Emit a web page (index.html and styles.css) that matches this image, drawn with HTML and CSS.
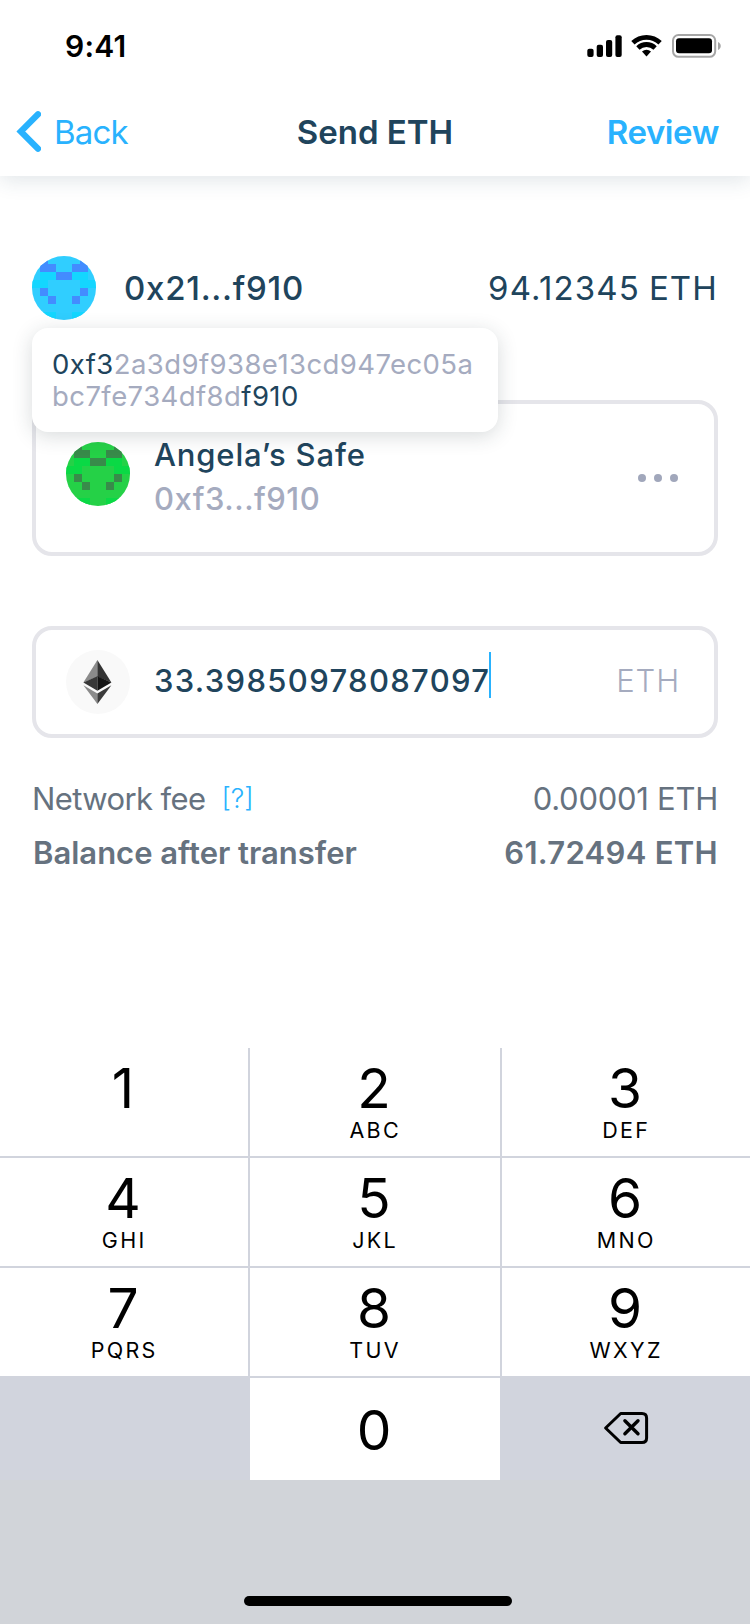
FILE: index.html
```html
<!DOCTYPE html>
<html lang="en">
<head>
<meta charset="utf-8">
<title>Send ETH</title>
<link rel="stylesheet" href="styles.css">
</head>
<body>
<div class="screen">
  <header class="header">
    <div class="status">
      <span class="status-time">9:41</span>
      <svg class="status-icons" width="135" height="28" viewBox="587 32 135 28">
        <rect x="587.3" y="48.7" width="6.3" height="8.3" rx="2"/>
        <rect x="596.7" y="44.7" width="6.3" height="12.3" rx="2"/>
        <rect x="606" y="40" width="6.2" height="17" rx="2"/>
        <rect x="615.4" y="35.2" width="6.3" height="21.8" rx="2"/>
        <path d="M632.9 42.8A19.8 19.8 0 0 1 660.1 42.8M637.9 47.9A12.6 12.6 0 0 1 655.1 47.9" fill="none" stroke="#000" stroke-width="4.8"/>
        <path d="M642 51.5A7 7 0 0 1 651 51.5L646.5 56.6Z"/>
        <rect x="673" y="35" width="42.2" height="21.8" rx="5.5" fill="none" stroke="#a6a6a6" stroke-width="2"/>
        <rect x="676" y="38.2" width="36" height="15" rx="3"/>
        <path d="M718 42C721.7 43.5 721.7 48.5 718 50Z" fill="#a6a6a6"/>
      </svg>
    </div>
    <nav class="nav">
      <div class="nav-back">
        <svg width="25" height="42" viewBox="0 0 25 42"><path d="M22 3.3L4.8 20.5L22 37.7" fill="none" stroke="#29b2fe" stroke-width="6.2" stroke-linecap="round"/></svg>
        <span class="back-label">Back</span>
      </div>
      <h1 class="nav-title">Send ETH</h1>
      <span class="nav-review">Review</span>
    </nav>
  </header>

  <main class="main">
    <section class="sender">
      <svg class="avatar" viewBox="0 0 8 8" shape-rendering="crispEdges">
        <path fill="#30ceff" d="M0 0h8v8H0z"/>
        <path fill="#14d6ff" d="M1 2h2v1H1zM5 2h2v1H5zM0 3h2v1H0zM6 3h2v1H6zM0 7h3v1H0zM5 7h3v1H5z"/>
        <path fill="#438cff" d="M1 0h1v1H1zM6 0h1v1H6zM1 1h2v1H1zM5 1h2v1H5zM3 2h2v1H3zM1 4h1v1H1zM6 4h1v1H6zM2 5h1v1H2zM5 5h1v1H5z"/>
      </svg>
      <span class="sender-address">0x21...f910</span>
      <span class="sender-balance">94.12345 ETH</span>
      <div class="tooltip"><b>0xf3</b>2a3d9f938e13cd947ec05a<br>bc7fe734df8d<b>f910</b></div>
    </section>

    <section class="card recipient">
      <svg class="avatar" viewBox="0 0 8 8" shape-rendering="crispEdges">
        <path fill="#25d147" d="M0 0h8v8H0z"/>
        <path fill="#0ad945" d="M1 2h2v1H1zM5 2h2v1H5zM0 3h2v1H0zM6 3h2v1H6zM0 7h3v1H0zM5 7h3v1H5z"/>
        <path fill="#388b4a" d="M1 0h1v1H1zM6 0h1v1H6zM1 1h2v1H1zM5 1h2v1H5zM3 2h2v1H3zM1 4h1v1H1zM6 4h1v1H6zM2 5h1v1H2zM5 5h1v1H5z"/>
      </svg>
      <div class="recipient-text">
        <div class="recipient-name">Angela’s Safe</div>
        <div class="recipient-address">0xf3...f910</div>
      </div>
      <svg class="more" width="40" height="8" viewBox="0 0 40 8" fill="#a1a7bb"><circle cx="4" cy="4" r="4"/><circle cx="20" cy="4" r="4"/><circle cx="36" cy="4" r="4"/></svg>
    </section>

    <section class="card amount">
      <svg class="avatar" viewBox="66 650 64 64">
        <path fill="#f9f9f9" d="M66 650h64v64H66z"/>
        <path fill="#8b8b8b" d="M97.4 660V676.7L83.4 682.6Z"/>
        <path fill="#343434" d="M97.4 660V676.7L111.4 682.6Z"/>
        <path fill="#383838" d="M83.4 682.6L97.4 676.3V690.8Z"/>
        <path fill="#141414" d="M111.4 682.6L97.4 676.3V690.8Z"/>
        <path fill="#8b8b8b" d="M83.4 685.3L97.4 693.5V704Z"/>
        <path fill="#3b3b3b" d="M111.4 685.3L97.4 693.5V704Z"/>
      </svg>
      <span class="amount-value">33.39850978087097</span>
      <span class="caret"></span>
      <span class="amount-unit">ETH</span>
    </section>

    <section class="summary">
      <div class="summary-row">
        <span class="fee-label">Network fee</span>
        <span class="fee-help">[?]</span>
        <span class="fee-value">0.00001 ETH</span>
      </div>
      <div class="summary-row strong">
        <span class="after-label">Balance after transfer</span>
        <span class="after-value">61.72494 ETH</span>
      </div>
    </section>
  </main>

  <section class="keyboard">
    <div class="keypad">
      <div class="key"><span class="digit">1</span></div>
      <div class="key"><span class="digit">2</span><span class="letters">ABC</span></div>
      <div class="key"><span class="digit">3</span><span class="letters">DEF</span></div>
      <div class="key"><span class="digit">4</span><span class="letters">GHI</span></div>
      <div class="key"><span class="digit">5</span><span class="letters">JKL</span></div>
      <div class="key"><span class="digit">6</span><span class="letters">MNO</span></div>
      <div class="key"><span class="digit">7</span><span class="letters">PQRS</span></div>
      <div class="key"><span class="digit">8</span><span class="letters">TUV</span></div>
      <div class="key"><span class="digit">9</span><span class="letters">WXYZ</span></div>
      <div class="key blank"></div>
      <div class="key zero"><span class="digit">0</span></div>
      <div class="key blank">
        <svg class="backspace" width="46" height="34" viewBox="603 1411 46 34" fill="none" stroke="#000" stroke-linecap="round" stroke-linejoin="round">
          <path d="M620.7 1413.5H642Q646.6 1413.5 646.6 1418V1438Q646.6 1442.5 642 1442.5H620.7L605.6 1428Z" stroke-width="3"/>
          <path d="M624.9 1420.8L638 1433.8M638 1420.8L624.9 1433.8" stroke-width="3.4"/>
        </svg>
      </div>
    </div>
    <div class="home-indicator"></div>
  </section>
</div>
</body>
</html>
```
FILE: styles.css
```css
* { box-sizing: border-box; }

body {
  margin: 0;
  background: #fff;
  font-family: Inter, "Liberation Sans", sans-serif;
  color: #20445c;
}

svg { display: block; flex: none; }

.screen {
  width: 750px;
  height: 1624px;
  display: flex;
  flex-direction: column;
  overflow: hidden;
}

/* Header */
.header {
  height: 176px;
  background: #fff;
  box-shadow: 0 4px 20px rgba(32, 68, 92, 0.14);
  clip-path: inset(0 0 -40px 0);
}

.status {
  height: 92px;
  padding: 0 28px 0 65px;
  display: flex;
  align-items: center;
  justify-content: space-between;
}

.status-time {
  font-size: 30px;
  font-weight: 600;
  letter-spacing: 0.2px;
  color: #000;
}

.nav {
  height: 80px;
  padding: 0 31px 0 16px;
  display: grid;
  grid-template-columns: 1fr auto 1fr;
  align-items: center;
  font-size: 33px;
  white-space: nowrap;
}

.nav-back {
  display: flex;
  align-items: center;
  gap: 13px;
  color: #29b2fe;
}

.back-label { letter-spacing: -0.8px; }

.nav-title {
  margin: 0;
  font-size: 33px;
  font-weight: 600;
  padding-left: 15px;
}

.nav-review {
  justify-self: end;
  font-weight: 600;
  letter-spacing: -0.4px;
  color: #29b2fe;
}

/* Content */
.main {
  height: 872px;
  padding: 80px 32px 0;
}

.avatar {
  width: 64px;
  height: 64px;
  border-radius: 50%;
}

.sender {
  position: relative;
  height: 64px;
  display: flex;
  align-items: center;
  font-size: 33px;
}

.sender-address {
  margin-left: 28px;
  font-weight: 500;
  letter-spacing: 0.73px;
}

.sender-balance {
  margin-left: auto;
  letter-spacing: 1.15px;
  word-spacing: -1.5px;
}

.tooltip {
  position: absolute;
  z-index: 1;
  top: 72px;
  left: 0;
  width: 466px;
  height: 104px;
  padding: 20px;
  border-radius: 16px;
  background: #fff;
  box-shadow: 0 4px 20px rgba(40, 54, 61, 0.18);
  font-size: 27.5px;
  line-height: 32px;
  letter-spacing: 0.42px;
  color: #a5abbf;
  white-space: nowrap;
}

.tooltip b {
  font-weight: 400;
  color: #20445c;
}

.card {
  display: flex;
  border: 4px solid #e5e5ea;
  border-radius: 20px;
  padding: 0 34px 0 30px;
  font-size: 31px;
}

.recipient {
  height: 156px;
  margin-top: 80px;
  padding-top: 29px;
}

.recipient .avatar { margin-top: 9px; }

.recipient-text {
  margin-left: 24px;
  line-height: 44px;
  font-weight: 500;
}

.recipient-name { letter-spacing: 0.84px; }

.recipient-address {
  letter-spacing: 0.5px;
  color: #a5abbf;
}

.more { margin: 41px 2px 0 auto; }

.amount {
  height: 112px;
  margin-top: 70px;
  align-items: center;
}

.amount-value {
  margin-left: 24px;
  padding-bottom: 3px;
  font-weight: 500;
  letter-spacing: 1.34px;
}

.caret {
  width: 2px;
  height: 46px;
  margin: 0 0 14px -1px;
  background: #29b2fe;
}

.amount-unit {
  margin-left: auto;
  padding-bottom: 3px;
  font-weight: 300;
  letter-spacing: 0.9px;
  color: #a5abbf;
}

.summary {
  padding-top: 34px;
  font-size: 31px;
  line-height: 54px;
  color: #66727f;
  white-space: nowrap;
}

.summary-row { display: flex; }

.strong { font-weight: 600; }

.fee-label { letter-spacing: -0.6px; }

.fee-help {
  margin-left: 16px;
  font-size: 27px;
  font-weight: 300;
  letter-spacing: 0;
  color: #29b2fe;
}

.fee-value {
  margin-left: auto;
  letter-spacing: -0.26px;
}

.after-label {
  padding-left: 1px;
}

.after-value {
  margin-left: auto;
  letter-spacing: 0.3px;
}

/* Numeric keyboard */
.keyboard {
  flex: 1;
  background: #d1d4d9;
  color: #000;
}

.keypad {
  display: grid;
  grid-template-columns: 248px 250px 248px;
  grid-template-rows: 108px 108px 108px 102px;
  column-gap: 2px;
  row-gap: 2px;
  background: #d1d4dd;
}

.key {
  display: flex;
  flex-direction: column;
  align-items: center;
  padding: 10px 2px 0 0;
  background: #fff;
}

.digit {
  font-size: 55px;
  line-height: 60px;
}

.letters {
  padding-left: 2.3px;
  font-size: 21.5px;
  line-height: 24px;
  letter-spacing: 2.3px;
}

.zero { padding-top: 22px; }

.blank {
  background: #d1d4dd;
  padding: 33px 0 0;
}

.home-indicator {
  width: 268px;
  height: 10px;
  margin: 116px 0 0 244px;
  border-radius: 5px;
  background: #000;
}
```
